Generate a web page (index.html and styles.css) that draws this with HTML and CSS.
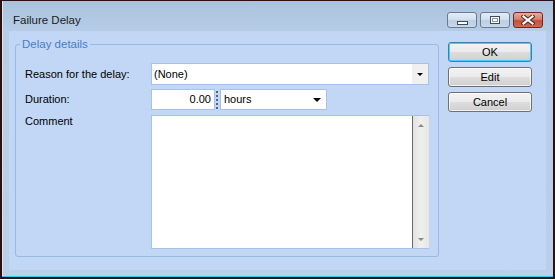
FILE: index.html
```html
<!DOCTYPE html>
<html lang="en">
<head>
  <meta charset="UTF-8">
  <title>Failure Delay</title>
  <link rel="stylesheet" href="styles.css">
</head>
<body>
  <div class="window">
    <div class="titlebar">
      <span class="title">Failure Delay</span>
      <div class="caption-buttons">
        <span class="cap-btn"><span class="min-glyph"></span></span>
        <span class="cap-btn"><span class="max-glyph"></span></span>
        <span class="cap-btn close">
          <svg width="14" height="10" viewBox="0 0 14 10">
            <path d="M2.5 1.5 L11.5 8.5 M11.5 1.5 L2.5 8.5" stroke="#5a2a22" stroke-width="4.2" stroke-linecap="square"/>
            <path d="M2.5 1.5 L11.5 8.5 M11.5 1.5 L2.5 8.5" stroke="#ffffff" stroke-width="2.2" stroke-linecap="square"/>
          </svg>
        </span>
      </div>
    </div>

    <div class="client">
      <fieldset class="details">
        <legend>Delay details</legend>
        <div class="form">
          <label class="field-label">Reason for the delay:</label>
          <div class="combo reason">
            <span class="value">(None)</span>
            <span class="drop"><i class="arrow-sm"></i></span>
          </div>

          <label class="field-label">Duration:</label>
          <div class="duration">
            <div class="number">0.00</div>
            <div class="splitter"></div>
            <div class="combo unit">
              <span class="value">hours</span>
              <i class="arrow"></i>
            </div>
          </div>

          <label class="field-label top">Comment</label>
          <div class="memo">
            <div class="memo-text"></div>
            <div class="vscroll">
              <i class="scroll-up"></i>
              <i class="scroll-down"></i>
            </div>
          </div>
        </div>
      </fieldset>

      <div class="actions">
        <button class="btn default">OK</button>
        <button class="btn">Edit</button>
        <button class="btn">Cancel</button>
      </div>
    </div>
  </div>
</body>
</html>
```

FILE: styles.css
```css
body {
  margin: 0;
  font-family: 'Liberation Sans', Arial, sans-serif;
  font-size: 11px;
  color: #000;
  background: #2a1010;
}

.window {
  width: 555px;
  height: 279px;
  box-sizing: border-box;
  border-style: solid;
  border-color: #2a1010;
  border-width: 1px 2px 2px 2px;
  background: linear-gradient(180deg, #aac2dd 0%, #b8cee7 12%, #bad0e9 100%);
  box-shadow: inset 0 -1px 0 #36c6ec, inset 1px 0 0 #d6e4f3;
  display: flex;
  flex-direction: column;
}

.titlebar {
  height: 30px;
  flex: none;
  display: flex;
  align-items: flex-start;
  padding: 11px 10px 0 11px;
  box-sizing: border-box;
}

.title {
  margin-top: 1px;
  font-size: 11.5px;
  line-height: 14px;
  color: #1b1b1b;
}

.caption-buttons {
  margin-left: auto;
  display: flex;
  gap: 3px;
}

.cap-btn {
  width: 30px;
  height: 16px;
  box-sizing: border-box;
  border: 1px solid #6a7b90;
  border-radius: 3px;
  background: linear-gradient(180deg, #e4ecf6 0%, #d3e0ee 45%, #bccee3 55%, #c8d8ea 100%);
  display: flex;
  align-items: center;
  justify-content: center;
}

.cap-btn.close {
  border-color: #6e2b23;
  background: linear-gradient(180deg, #e9aa9b 0%, #d8806c 45%, #c4503a 55%, #cf6a52 100%);
}

.min-glyph {
  width: 11px;
  height: 4px;
  box-sizing: border-box;
  border: 1px solid #3b4a5c;
  background: #fff;
  margin-top: 6px;
}

.max-glyph {
  width: 10px;
  height: 8px;
  box-sizing: border-box;
  border: 1px solid #3b4a5c;
  background: #fff;
  box-shadow: inset 0 0 0 1px #fff, inset 0 0 0 2px #8796a8;
}

.client {
  flex: 1;
  margin: 0 7px 7px 7px;
  background: #c1d7f5;
  display: flex;
  align-items: flex-start;
  gap: 9px;
  padding: 6px 14px 0 6px;
}

.details {
  margin: 0;
  padding: 0;
  width: 424px;
  box-sizing: border-box;
  border: 1px solid #98b9e2;
  border-radius: 3px;
  min-width: 0;
}

.details legend {
  margin-left: 4px;
  padding: 0 2px;
  font-size: 11.5px;
  line-height: 14px;
  color: #4a7dc4;
}

.form {
  display: grid;
  grid-template-columns: 126px 278px;
  row-gap: 4px;
  padding: 12px 9px 7px 9px;
  align-items: center;
}

.field-label {
  line-height: 13px;
}

.field-label.top {
  align-self: start;
  margin-top: 1px;
}

.combo {
  display: flex;
  align-items: center;
  box-sizing: border-box;
  background: #fff;
  border: 1px solid #a6c2e8;
}

.combo .value {
  flex: 1;
  line-height: 13px;
}

.reason {
  height: 22px;
}

.reason .value {
  padding-left: 2px;
}

.drop {
  width: 16px;
  align-self: stretch;
  background: #f0f0f0;
  display: flex;
  align-items: center;
  justify-content: center;
}

.arrow-sm {
  width: 0;
  height: 0;
  border-left: 3px solid transparent;
  border-right: 3px solid transparent;
  border-top: 3px solid #000;
}

.duration {
  display: flex;
  align-items: stretch;
  height: 21px;
}

.number {
  width: 64px;
  box-sizing: border-box;
  background: #fff;
  border: 1px solid #a6c2e8;
  text-align: right;
  padding-right: 3px;
  line-height: 19px;
}

.splitter {
  width: 0;
  margin: 2px 2px 1px 1px;
  border-left: 2px dotted #55657a;
}

.unit {
  width: 107px;
}

.unit .value {
  padding-left: 3px;
}

.arrow {
  width: 0;
  height: 0;
  margin-right: 5px;
  border-left: 4px solid transparent;
  border-right: 4px solid transparent;
  border-top: 4px solid #000;
}

.memo {
  margin-top: 1px;
  height: 134px;
  box-sizing: border-box;
  display: flex;
  background: #fff;
  border: 1px solid #a6c2e8;
  border-right: none;
}

.memo-text {
  flex: 1;
}

.vscroll {
  width: 17px;
  box-sizing: border-box;
  border-left: 1px solid #6a6a6a;
  background: linear-gradient(90deg, #e2e2e2 0%, #efefef 50%, #e6e6e6 100%);
  display: flex;
  flex-direction: column;
  justify-content: space-between;
  align-items: center;
  padding: 8px 0 7px;
}

.scroll-up {
  width: 0;
  height: 0;
  border-left: 3px solid transparent;
  border-right: 3px solid transparent;
  border-bottom: 3px solid #8a8a8a;
}

.scroll-down {
  width: 0;
  height: 0;
  border-left: 3px solid transparent;
  border-right: 3px solid transparent;
  border-top: 3px solid #8a8a8a;
}

.actions {
  margin-top: 5px;
  display: flex;
  flex-direction: column;
  gap: 5px;
}

.btn {
  width: 84px;
  height: 20px;
  padding: 0;
  font-family: 'Liberation Sans', Arial, sans-serif;
  font-size: 11px;
  color: #000;
  border: 1px solid #707070;
  border-radius: 3px;
  background: linear-gradient(180deg, #f2f2f2 0%, #ebebeb 48%, #dddddd 52%, #cfcfcf 100%);
  box-shadow: inset 0 0 0 1px rgba(255, 255, 255, 0.7);
}

.btn.default {
  border-color: #3c7fb1;
  box-shadow: inset 0 0 0 1px #48cff5;
}
```
